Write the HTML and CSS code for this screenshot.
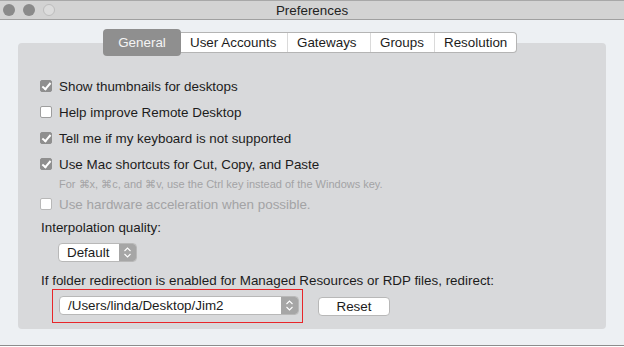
FILE: index.html
```html
<!DOCTYPE html>
<html lang="en">
<head>
  <meta charset="UTF-8">
  <title>Preferences</title>
  <link rel="stylesheet" href="styles.css">
</head>
<body>
  <div class="window">
    <div class="titlebar">
      <div class="lights">
        <span class="light"></span>
        <span class="light"></span>
        <span class="light off"></span>
      </div>
      <div class="title">Preferences</div>
    </div>

    <div class="content">
      <div class="tabs">
        <div class="tab selected">General</div>
        <div class="tab-group">
          <div class="tab">User Accounts</div>
          <div class="tab">Gateways</div>
          <div class="tab">Groups</div>
          <div class="tab">Resolution</div>
        </div>
      </div>

      <div class="panel">
        <label class="check-row"><span class="box checked"></span>Show thumbnails for desktops</label>
        <label class="check-row"><span class="box"></span>Help improve Remote Desktop</label>
        <label class="check-row"><span class="box checked"></span>Tell me if my keyboard is not supported</label>
        <label class="check-row"><span class="box checked"></span>Use Mac shortcuts for Cut, Copy, and Paste</label>
        <div class="hint">For &#8984;x, &#8984;c, and &#8984;v, use the Ctrl key instead of the Windows key.</div>
        <label class="check-row disabled"><span class="box"></span>Use hardware acceleration when possible.</label>

        <div class="field-label">Interpolation quality:</div>
        <div class="popup popup-small">
          <span class="popup-text">Default</span>
          <span class="popup-arrows">
            <svg width="9" height="13" viewBox="0 0 9 13"><path d="M1.5 5 L4.5 2 L7.5 5 M1.5 8 L4.5 11 L7.5 8" fill="none" stroke="#fff" stroke-width="1.1"/></svg>
          </span>
        </div>

        <div class="field-label redirect-label">If folder redirection is enabled for Managed Resources or RDP files, redirect:</div>
        <div class="redirect-row">
          <div class="highlight">
            <div class="popup popup-wide">
              <span class="popup-text">/Users/linda/Desktop/Jim2</span>
              <span class="popup-arrows">
                <svg width="9" height="13" viewBox="0 0 9 13"><path d="M1.5 5 L4.5 2 L7.5 5 M1.5 8 L4.5 11 L7.5 8" fill="none" stroke="#fff" stroke-width="1.1"/></svg>
              </span>
            </div>
          </div>
          <button class="reset-button">Reset</button>
        </div>
      </div>
    </div>
  </div>
</body>
</html>
```

FILE: styles.css
```css
:root {
  --window-bg: #edf0f3;
  --panel-bg: #d8d9db;
  --control-gray: #8f8f8f;
  --text-dark: #1c1c1c;
  --text-dim: #a3a3a5;
}

* {
  box-sizing: border-box;
}

body {
  margin: 0;
  width: 624px;
  height: 347px;
  font-family: 'Liberation Sans', Arial, sans-serif;
  font-size: 13.4px;
  color: var(--text-dark);
  background: #ffffff;
}

.window {
  height: 346px;
  background: var(--window-bg);
  border-top: 1px solid #a8a8a8;
  border-bottom: 1px solid #8c8c8c;
  display: flex;
  flex-direction: column;
}

.titlebar {
  height: 19px;
  background: #d3d3d3;
  border-bottom: 1px solid #a0a0a0;
  display: flex;
  align-items: center;
  position: relative;
}

.lights {
  display: flex;
  gap: 8px;
  padding-left: 3px;
}

.light {
  width: 12px;
  height: 12px;
  border-radius: 50%;
  background: #8a8a8a;
}

.light.off {
  background: #dcdcdc;
  border: 1px solid #bdbdbd;
}

.title {
  position: absolute;
  left: 0;
  right: 0;
  text-align: center;
  font-size: 13.4px;
  color: #222;
}

.content {
  flex: 1;
  padding: 9px 18px 0 18px;
}

.tabs {
  display: flex;
  align-items: center;
  height: 27px;
  margin-left: 85px;
  margin-bottom: -13px;
  position: relative;
  z-index: 1;
}

.tab {
  padding: 0 9px;
  line-height: 19px;
  white-space: nowrap;
}

.tab.selected {
  height: 27px;
  line-height: 27px;
  width: 78px;
  text-align: center;
  background: var(--control-gray);
  color: #f4f4f4;
  border-radius: 4px;
}

.tab-group {
  display: flex;
  background: #ffffff;
  border: 1px solid #b4b4b4;
  border-left: none;
  border-radius: 0 4px 4px 0;
  height: 21px;
}

.tab-group .tab + .tab {
  border-left: 1px solid #dadada;
}

.tab-group .tab:nth-child(1) { width: 106px; }
.tab-group .tab:nth-child(2) { width: 83px; }
.tab-group .tab:nth-child(3) { width: 64px; }
.tab-group .tab:nth-child(4) { width: 82px; }

.panel {
  height: 286px;
  background: var(--panel-bg);
  border-radius: 4px;
  padding: 30px 22px 0 22px;
}

.check-row {
  display: flex;
  align-items: center;
  height: 26px;
  gap: 7px;
}

.box {
  width: 12px;
  height: 12px;
  border-radius: 2px;
  background: #ffffff;
  border: 1px solid #9e9e9e;
  position: relative;
}

.box.checked {
  background: var(--control-gray);
  border-color: var(--control-gray);
}

.box.checked::after {
  content: '';
  position: absolute;
  left: 3px;
  top: 0px;
  width: 3px;
  height: 7px;
  border: solid #ffffff;
  border-width: 0 2px 2px 0;
  transform: rotate(40deg);
}

.check-row.disabled {
  color: var(--text-dim);
}

.check-row.disabled .box {
  border-color: #b8b8b8;
}

.hint {
  margin-left: 19px;
  font-size: 11px;
  line-height: 14px;
  color: var(--text-dim);
}

.field-label {
  line-height: 22px;
  padding-left: 1px;
}

.popup {
  display: flex;
  align-items: stretch;
  height: 19px;
  background: #ffffff;
  border: 1px solid #b8b8b8;
  border-radius: 4px;
  overflow: hidden;
}

.popup-small {
  width: 79px;
  margin: 4px 0 0 18px;
}

.popup-wide {
  width: 240px;
}

.popup-text {
  flex: 1;
  padding-left: 8px;
  line-height: 17px;
}

.popup-arrows {
  width: 17px;
  background: #a6a6a6;
  display: flex;
  align-items: center;
  justify-content: center;
}

.redirect-label {
  margin-top: 8px;
}

.redirect-row {
  display: flex;
  align-items: center;
  margin-top: -3px;
  margin-left: 12px;
}

.highlight {
  border: 1px solid #e8262a;
  padding: 6px 3px 7px 6px;
}

.reset-button {
  margin-left: 15px;
  width: 72px;
  height: 19px;
  background: #ffffff;
  border: 1px solid #b8b8b8;
  border-radius: 4px;
  font-family: inherit;
  font-size: 13.4px;
  color: var(--text-dark);
  padding: 0;
}
```
